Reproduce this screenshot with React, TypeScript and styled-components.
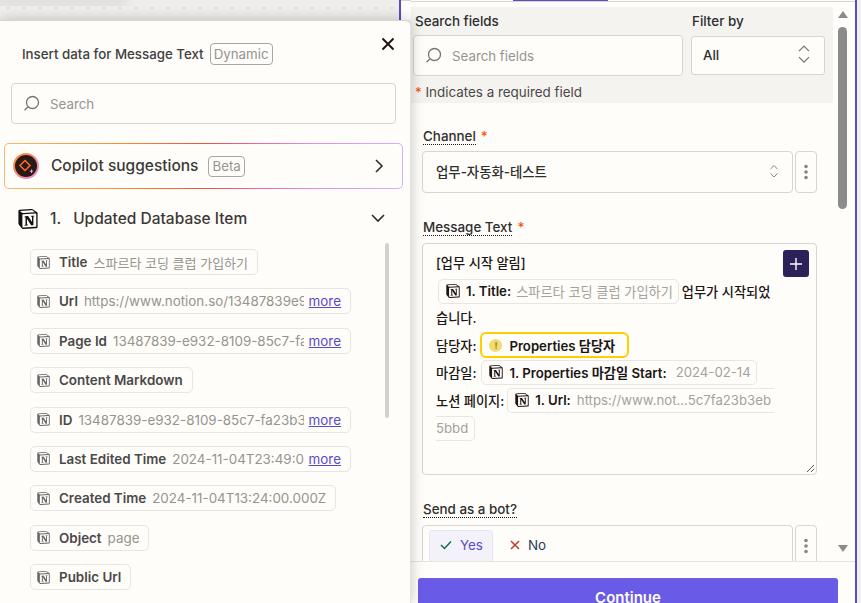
import React from "react"
import styled, { createGlobalStyle } from "styled-components"
import { SiNotion } from "react-icons/si"

const GlobalStyle = createGlobalStyle`
  html, body {
    margin: 0;
    padding: 0;
    background: #f0efed;
  }
  * {
    box-sizing: border-box;
  }
`

const FONT = `Inter, "Noto Sans CJK KR", "Liberation Sans", sans-serif`

const Page = styled.div`
  display: flex;
  width: 861px;
  height: 603px;
  overflow: hidden;
  font-family: ${FONT};
  color: #2d2e2e;
  background-color: #f0efed;
  background-image: radial-gradient(#d9d8d5 1px, transparent 1px);
  background-size: 16px 16px;
`

const LeftColumn = styled.div`
  display: flex;
  flex-direction: column;
  flex: 0 0 411px;
  position: relative;
  z-index: 2;
`

const TopStrip = styled.div`
  display: flex;
  height: 20px;
`

const StripCanvas = styled.div`
  flex: 0 0 401px;
  border-right: 2px solid #5a4bc7;
  background-color: #efeeec;
  background-image: linear-gradient(to right, rgba(0, 0, 0, 0.05) 30%, transparent 34%),
    radial-gradient(#d9d8d5 1px, transparent 1px);
  background-size: 100% 6px, 16px 16px;
  background-repeat: no-repeat, repeat;
`

const StripPanel = styled.div`
  flex: 1;
  background: #fffdf9;
  box-shadow: inset 0 1px 0 #d6d5d2;
`

const InsertPanel = styled.div`
  position: relative;
  flex: 1;
  overflow: hidden;
  background: #fffdf9;
  border-top: 1px solid #d6d5d2;
  border-right: 1px solid #e4e3e0;
  border-top-right-radius: 6px;
  box-shadow: 0 0 14px rgba(0, 0, 0, 0.22);
`

const PanelHeader = styled.div`
  display: flex;
  justify-content: space-between;
  align-items: flex-start;
  height: 44px;
  padding: 0 14px 0 22px;
`

const TitleGroup = styled.div`
  display: flex;
  align-items: center;
  gap: 6px;
  height: 22px;
  margin-top: 22px;
  font-size: 13.3px;
  font-weight: 500;
  color: #403f3e;
`

const Badge = styled.span`
  display: inline-flex;
  align-items: center;
  height: ${p => p.$h}px;
  padding: 0 3px;
  border: 1px solid #a8a7a4;
  border-radius: 4px;
  font-size: 13.3px;
  font-weight: 400;
  color: #95948f;
`

const CloseButton = styled.button`
  display: flex;
  background: none;
  border: none;
  padding: 0;
  margin-top: 15px;
  color: #201515;
`

const SearchBox = styled.div`
  display: flex;
  align-items: center;
  gap: 10px;
  height: ${p => p.$h}px;
  width: ${p => p.$w}px;
  padding-left: 11px;
  background: #fffdf9;
  border: 1px solid #d6d5d2;
  border-radius: 4px;
  font-size: 13.3px;
  color: #95948f;
`

const PanelSearch = styled(SearchBox)`
  margin: 18px 0 0 11px;
`

const CopilotBorder = styled.div`
  width: 399px;
  height: 46px;
  margin: 19px 0 0 4px;
  padding: 1px;
  border-radius: 5px;
  background: linear-gradient(to right, #fbb96f 0%, #ff8a2c 30%, #f0543c 50%, #ee5c8e 60%, #e88ce4 78%, #cfb0fb 100%);
`

const CopilotInner = styled.div`
  display: flex;
  align-items: center;
  height: 100%;
  padding: 0 18px 0 8px;
  border-radius: 4px;
  background: #fffdf9;
`

const CopilotLabel = styled.span`
  margin: 0 10px 2px 12px;
  font-size: 15.5px;
  font-weight: 500;
  color: #3a3938;
`

const Push = styled.span`
  margin-left: auto;
  display: flex;
`

const SourceRow = styled.div`
  display: flex;
  align-items: center;
  height: 20px;
  margin-top: 20px;
  padding: 0 24px 0 18px;
  font-size: 15.5px;
  font-weight: 500;
  color: #3a3938;
`

const SourceNumber = styled.span`
  margin: 0 12px 2px 12px;
`

const SourceTitle = styled.span`
  margin-bottom: 2px;
`

const ChipList = styled.div`
  display: flex;
  flex-direction: column;
  align-items: flex-start;
  gap: 13.4px;
  margin: 20px 0 0 30px;
`

const Chip = styled.div`
  display: flex;
  align-items: center;
  width: ${p => (p.$clipped ? "321px" : "auto")};
  height: 26px;
  padding: 0 9px 0 6px;
  border: 1px solid #e7e6e3;
  border-radius: 5px;
  font-size: 13.4px;
  white-space: nowrap;
`

const ChipIcon = styled(SiNotion)`
  flex: none;
  width: 13px;
  height: 13px;
  margin-right: 9px;
  color: #666;
`

const ChipLabel = styled.span`
  flex: none;
  font-weight: 600;
  color: #4a4948;
`

const ChipValue = styled.span`
  flex: 0 1 auto;
  min-width: 0;
  overflow: hidden;
  margin-left: 6px;
  font-size: ${p => (p.$korean ? "13px" : "inherit")};
  color: #95948f;
`

const MoreLink = styled.a`
  flex: none;
  margin-left: auto;
  padding-left: 5px;
  color: #5a4bc7;
  text-decoration: underline;
`

const ListScrollbar = styled.div`
  position: absolute;
  left: 385px;
  top: 222px;
  width: 4px;
  height: 175px;
  border-radius: 2px;
  background: #d2d1ce;
`

const EditorPanel = styled.div`
  display: flex;
  flex-direction: column;
  flex: 0 0 446px;
  min-height: 0;
  background: #fffdf9;
  border-right: 2px solid #5a4bc7;
`

const TabLine = styled.div`
  display: flex;
  flex: none;
  height: 2px;
  padding-left: 102px;
  border-bottom: 1px solid #d6d5d2;
`

const ActiveTab = styled.div`
  width: 95px;
  height: 1px;
  background: #5a4bc7;
`

const ScrollRegion = styled.div`
  display: flex;
  flex: 1;
  min-height: 0;
  overflow: hidden;
`

const FormColumn = styled.div`
  flex: 0 0 422px;
`

const FilterBlock = styled.div`
  height: 96px;
  margin-top: 5px;
  padding: 5px 0 0 2px;
  background: #f4f3f0;
  border-radius: 0 3px 3px 0;
`

const FilterGrid = styled.div`
  display: grid;
  grid-template-columns: 270px 134px;
  column-gap: 8px;
  row-gap: 5px;
  align-items: center;
`

const SmallLabel = styled.div`
  height: 18px;
  padding-left: ${p => p.$inset}px;
  font-size: 13.4px;
  line-height: 18px;
  font-weight: 500;
`

const FilterSelect = styled.div`
  display: flex;
  align-items: center;
  justify-content: space-between;
  height: 39px;
  padding: 0 13px 2px 11px;
  background: #fffdf9;
  border: 1px solid #d6d5d2;
  border-radius: 3px;
  font-size: 13.4px;
  font-weight: 500;
`

const RequiredNote = styled.div`
  margin: 7px 0 0 2px;
  font-size: 13.4px;
  line-height: 18px;
  color: #4a4948;
`

const Star = styled.span`
  color: #ff4a00;
`

const FieldLabel = styled.div`
  display: flex;
  gap: 5px;
  height: 18px;
  margin: ${p => p.$top}px 0 ${p => p.$bottom}px 12px;
  font-size: 13.4px;
  line-height: 17px;
  font-weight: 500;
`

const DottedText = styled.span`
  height: 17px;
  border-bottom: 1px dotted #201515;
`

const FieldRow = styled.div`
  display: flex;
  gap: 2px;
  margin-left: 11px;
`

const ChannelSelect = styled.div`
  display: flex;
  align-items: center;
  justify-content: space-between;
  width: 371px;
  height: 42px;
  padding: 0 13px 2px;
  border: 1px solid #d6d5d2;
  border-radius: 4px;
  font-size: 13.4px;
  font-weight: 500;
`

const KebabButton = styled.div`
  display: flex;
  align-items: center;
  justify-content: center;
  width: 22px;
  height: 42px;
  border: 1px solid #d6d5d2;
  border-radius: 4px;
  color: #777;
`

const MessageBox = styled.div`
  position: relative;
  width: 395px;
  height: 232px;
  margin-left: 11px;
  padding: 6px 0 0 13px;
  border: 1px solid #d6d5d2;
  border-radius: 4px;
  font-size: 13.2px;
  font-weight: 500;
  color: #201515;
`

const PlusButton = styled.div`
  position: absolute;
  top: 6px;
  right: 7px;
  display: flex;
  align-items: center;
  justify-content: center;
  width: 26px;
  height: 27px;
  border-radius: 3px;
  background: #2d2159;
  color: #fffdf9;
`

const ResizeGrip = styled.svg`
  position: absolute;
  right: 1px;
  bottom: 1px;
`

const TextLine = styled.div`
  display: flex;
  align-items: center;
  height: ${p => p.$h}px;
  white-space: nowrap;
`

const Pill = styled.span`
  display: inline-flex;
  align-items: center;
  flex: none;
  height: 25px;
  margin: 0 ${p => p.$right || 0}px 0 ${p => p.$left || 0}px;
  padding: 0 5px 0 7px;
  border: 1px solid #e7e6e3;
  border-radius: 5px;
  background: #fffdf9;
  font-weight: 600;
`

const OpenPill = styled(Pill)`
  width: 267px;
  overflow: hidden;
  padding-right: 0;
  border-right: none;
  border-radius: 5px 0 0 5px;
`

const TailPill = styled(Pill)`
  padding: 0 6px 0 0;
  border-left: none;
  border-radius: 0 5px 5px 0;
`

const WarningPill = styled(Pill)`
  height: 26px;
  padding: 0 12px 0 7px;
  border: 2px solid #ffcf00;
  border-radius: 6px;
`

const WarningDot = styled.span`
  display: inline-flex;
  align-items: center;
  justify-content: center;
  width: 13px;
  height: 13px;
  margin-right: 7px;
  border-radius: 50%;
  background: #f1dc6d;
  color: #8f8140;
  font-size: 9px;
  font-weight: 700;
`

const PillIcon = styled(SiNotion)`
  flex: none;
  width: 14px;
  height: 14px;
  margin-right: 6px;
  color: #201515;
`

const PillValue = styled.span`
  margin-left: ${p => p.$gap ?? 6}px;
  font-weight: 400;
  color: #a3a29e;
`

const ChoiceBox = styled.div`
  display: flex;
  gap: 6px;
  width: 371px;
  height: 42px;
  padding: 4px 6px;
  border: 1px solid #d6d5d2;
  border-radius: 4px;
  font-size: 13.4px;
`

const Choice = styled.div`
  display: flex;
  align-items: center;
  gap: 8px;
  height: 32px;
  padding: 0 9px 2px 10px;
  border-radius: 3px;
  border: 1px solid ${p => (p.$active ? "#e6e4f8" : "transparent")};
  background: ${p => (p.$active ? "#f3f2fb" : "transparent")};
  color: ${p => (p.$active ? "#5a4bc7" : "#2d3a5c")};
`

const Scrollbar = styled.div`
  display: flex;
  flex-direction: column;
  align-items: center;
  flex: 1;
  padding: 9px 3px 0 0;
`

const ArrowUp = styled.div`
  width: 0;
  height: 0;
  border: 5px solid transparent;
  border-top: none;
  border-bottom: 7px solid #8b8b8b;
`

const ArrowDown = styled.div`
  width: 0;
  height: 0;
  margin-top: auto;
  margin-bottom: 9px;
  border: 5px solid transparent;
  border-bottom: none;
  border-top: 7px solid #8b8b8b;
`

const Thumb = styled.div`
  width: 9px;
  height: 182px;
  margin-top: 9px;
  border-radius: 5px;
  background: #8b8b8b;
`

const Footer = styled.div`
  flex: 0 0 42px;
  min-height: 0;
  overflow: hidden;
  padding: 16px 0 0 7px;
  background: #fffdf9;
  border-top: 1px solid #e4e3e0;
`

const ContinueButton = styled.button`
  display: block;
  width: 420px;
  height: 40px;
  border: none;
  border-radius: 3px;
  background: #6a5be6;
  color: #fffdf9;
  font-family: ${FONT};
  font-size: 15px;
  font-weight: 600;
  padding: 0 0 2px;
`

const CanvasGap = styled.div`
  flex: 1;
`

const SearchIcon = () => (
  <svg width="17" height="17" viewBox="0 0 17 17" fill="none" stroke="#77766f" strokeWidth="1.3">
    <circle cx="9.5" cy="7.5" r="6" />
    <path d="M4.8 12 L1.5 15.2" />
  </svg>
)

const UpDown = ({ size = 14 }: { size?: number }) => (
  <svg width={size} height={size * 1.45} viewBox="0 0 14 20" fill="none" stroke="#77766f" strokeWidth="1.3">
    <path d="M2 7 L7 2 L12 7" />
    <path d="M2 13 L7 18 L12 13" />
  </svg>
)

const Kebab = () => (
  <svg width="4" height="16" viewBox="0 0 4 16" fill="#858585">
    <circle cx="2" cy="2.5" r="1.8" />
    <circle cx="2" cy="8" r="1.8" />
    <circle cx="2" cy="13.5" r="1.8" />
  </svg>
)

const CopilotIcon = () => (
  <svg width="26" height="26" viewBox="0 0 26 26" fill="none">
    <defs>
      <linearGradient id="ring" x1="0" y1="0" x2="1" y2="1">
        <stop offset="0" stopColor="#ff8a2c" />
        <stop offset="1" stopColor="#e88ce4" />
      </linearGradient>
    </defs>
    <circle cx="13" cy="13" r="12" fill="#2a1a16" stroke="url(#ring)" strokeWidth="2" />
    <path d="M12 7.5 L17 12.5 L12 17.5 L7 12.5 Z" stroke="#ff6a2c" strokeWidth="1.5" />
    <path d="M18.5 16.5 V20 M16.8 18.2 H20.2" stroke="#ff9be0" strokeWidth="1" />
  </svg>
)

const fields = [
  { label: "Title", value: "스파르타 코딩 클럽 가입하기", korean: true },
  { label: "Url", value: "https://www.notion.so/13487839e9", more: true },
  { label: "Page Id", value: "13487839-e932-8109-85c7-fa", more: true },
  { label: "Content Markdown" },
  { label: "ID", value: "13487839-e932-8109-85c7-fa23b3", more: true },
  { label: "Last Edited Time", value: "2024-11-04T23:49:0", more: true },
  { label: "Created Time", value: "2024-11-04T13:24:00.000Z" },
  { label: "Object", value: "page" },
  { label: "Public Url" },
]

const App: React.FC = () => {
  return (
    <Page>
      <GlobalStyle />
      <LeftColumn>
        <TopStrip>
          <StripCanvas />
          <StripPanel />
        </TopStrip>
        <InsertPanel>
          <PanelHeader>
            <TitleGroup>
              Insert data for Message Text <Badge $h={22}>Dynamic</Badge>
            </TitleGroup>
            <CloseButton>
              <svg width="16" height="16" viewBox="0 0 16 16" stroke="currentColor" strokeWidth="2">
                <path d="M2.5 2.5 L13.5 13.5 M13.5 2.5 L2.5 13.5" />
              </svg>
            </CloseButton>
          </PanelHeader>
          <PanelSearch $w={385} $h={41}>
            <SearchIcon />
            <span>Search</span>
          </PanelSearch>
          <CopilotBorder>
            <CopilotInner>
              <CopilotIcon />
              <CopilotLabel>Copilot suggestions</CopilotLabel>
              <Badge $h={21}>Beta</Badge>
              <Push>
                <svg width="10" height="16" viewBox="0 0 10 16" fill="none" stroke="#2d2e2e" strokeWidth="1.6">
                  <path d="M2 2 L8 8 L2 14" />
                </svg>
              </Push>
            </CopilotInner>
          </CopilotBorder>
          <SourceRow>
            <SiNotion size={20} color="#111" />
            <SourceNumber>1.</SourceNumber>
            <SourceTitle>Updated Database Item</SourceTitle>
            <Push>
              <svg width="16" height="10" viewBox="0 0 16 10" fill="none" stroke="#2d2e2e" strokeWidth="1.6">
                <path d="M2 1 L8 7 L14 1" />
              </svg>
            </Push>
          </SourceRow>
          <ChipList>
            {fields.map(f => (
              <Chip key={f.label} $clipped={f.more}>
                <ChipIcon />
                <ChipLabel>{f.label}</ChipLabel>
                {f.value && <ChipValue $korean={f.korean}>{f.value}</ChipValue>}
                {f.more && <MoreLink>more</MoreLink>}
              </Chip>
            ))}
          </ChipList>
          <ListScrollbar />
        </InsertPanel>
      </LeftColumn>

      <EditorPanel>
        <TabLine>
          <ActiveTab />
        </TabLine>
        <ScrollRegion>
          <FormColumn>
            <FilterBlock>
              <FilterGrid>
                <SmallLabel $inset={2}>Search fields</SmallLabel>
                <SmallLabel $inset={1}>Filter by</SmallLabel>
                <SearchBox $w={270} $h={41}>
                  <SearchIcon />
                  <span>Search fields</span>
                </SearchBox>
                <FilterSelect>
                  All
                  <UpDown />
                </FilterSelect>
              </FilterGrid>
              <RequiredNote>
                <Star>*</Star> Indicates a required field
              </RequiredNote>
            </FilterBlock>

            <FieldLabel $top={25} $bottom={5}>
              <DottedText>Channel</DottedText>
              <Star>*</Star>
            </FieldLabel>
            <FieldRow>
              <ChannelSelect>
                업무-자동화-테스트
                <UpDown size={10} />
              </ChannelSelect>
              <KebabButton>
                <Kebab />
              </KebabButton>
            </FieldRow>

            <FieldLabel $top={26} $bottom={6}>
              <DottedText>Message Text</DottedText>
              <Star>*</Star>
            </FieldLabel>
            <MessageBox>
              <PlusButton>
                <svg width="12" height="12" viewBox="0 0 12 12" stroke="currentColor" strokeWidth="1.4">
                  <path d="M6 0 V12 M0 6 H12" />
                </svg>
              </PlusButton>
              <TextLine $h={24}>[업무 시작 알림]</TextLine>
              <TextLine $h={34}>
                <Pill $left={2} $right={3}>
                  <PillIcon />
                  1. Title:
                  <PillValue $gap={5}>스파르타 코딩 클럽 가입하기</PillValue>
                </Pill>
                업무가 시작되었
              </TextLine>
              <TextLine $h={18}>습니다.</TextLine>
              <TextLine $h={38}>
                담당자:
                <WarningPill $left={4}>
                  <WarningDot>!</WarningDot>
                  Properties 담당자
                </WarningPill>
              </TextLine>
              <TextLine $h={16}>
                마감일:
                <Pill $left={5}>
                  <PillIcon />
                  1. Properties 마감일 Start:
                  <PillValue $gap={9}>2024-02-14</PillValue>
                </Pill>
              </TextLine>
              <TextLine $h={40}>
                노션 페이지:
                <OpenPill $left={3}>
                  <PillIcon />
                  1. Url:
                  <PillValue>https://www.not...5c7fa23b3eb</PillValue>
                </OpenPill>
              </TextLine>
              <TextLine $h={16}>
                <TailPill>
                  <PillValue $gap={0}>5bbd</PillValue>
                </TailPill>
              </TextLine>
              <ResizeGrip width="9" height="9" viewBox="0 0 9 9" stroke="#555" strokeWidth="1">
                <path d="M1 8 L8 1 M5 8 L8 5" />
              </ResizeGrip>
            </MessageBox>

            <FieldLabel $top={26} $bottom={6}>
              <DottedText>Send as a bot?</DottedText>
            </FieldLabel>
            <FieldRow>
              <ChoiceBox>
                <Choice $active>
                  <svg width="12" height="10" viewBox="0 0 12 10" fill="none" stroke="#136b4a" strokeWidth="1.5">
                    <path d="M1 5 L4.5 8.5 L11 1.5" />
                  </svg>
                  Yes
                </Choice>
                <Choice>
                  <svg width="10" height="10" viewBox="0 0 10 10" fill="none" stroke="#c0392b" strokeWidth="1.5">
                    <path d="M1 1 L9 9 M9 1 L1 9" />
                  </svg>
                  No
                </Choice>
              </ChoiceBox>
              <KebabButton>
                <Kebab />
              </KebabButton>
            </FieldRow>
          </FormColumn>
          <Scrollbar>
            <ArrowUp />
            <Thumb />
            <ArrowDown />
          </Scrollbar>
        </ScrollRegion>
        <Footer>
          <ContinueButton>Continue</ContinueButton>
        </Footer>
      </EditorPanel>
      <CanvasGap />
    </Page>
  )
}

export default App
